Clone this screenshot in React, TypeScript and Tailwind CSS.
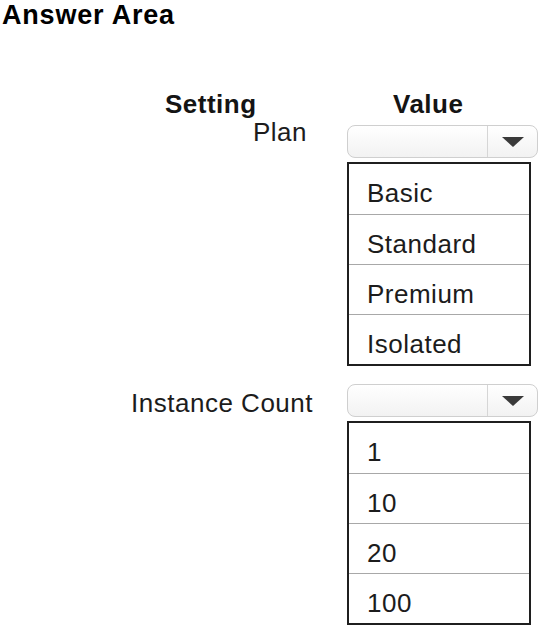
import React from 'react';

const plans = ['Basic', 'Standard', 'Premium', 'Isolated'];
const counts = ['1', '10', '20', '100'];

function Select() {
  return (
    <div className="flex w-[191px] h-[33px] rounded-[8px] border border-[#cfcfcf] bg-gradient-to-b from-white to-[#f2f2f2] overflow-hidden">
      <div className="flex-1 border-r border-[#d6d6d6]" />
      <div className="w-[49px] flex items-center justify-center">
        <svg width="22" height="10" viewBox="0 0 22 10">
          <polygon points="0,0 22,0 11,10" fill="#3a3a3a" />
        </svg>
      </div>
    </div>
  );
}

function OptionList({ items }: { items: string[] }) {
  return (
    <div className="w-[184px] border-2 border-[#1f1f1f] bg-white">
      {items.map((item, i) => (
        <div
          key={item}
          className={`h-[50px] pl-[18px] pt-[16px] leading-[26px] ${i > 0 ? 'border-t border-[#a8a8a8]' : ''}`}
        >
          {item}
        </div>
      ))}
    </div>
  );
}

export default function App() {
  return (
    <div className="w-[543px] h-[632px] bg-white font-['Liberation_Sans',Arial,sans-serif] text-[26px] tracking-[0.5px] text-[#1c1c1c] overflow-hidden">
      {/* Title */}
      <h1 className="pl-[2px] text-[27px] leading-[30px] font-bold tracking-[0.8px] text-black">Answer Area</h1>

      {/* Column headers */}
      <div className="mt-[61px] flex font-bold leading-[26px] text-[#141414]">
        <div className="w-[393px] pl-[165px]">Setting</div>
        <div>Value</div>
      </div>

      {/* Plan */}
      <div className="mt-[8px] flex items-start">
        <div className="w-[347px] pr-[40px] text-right leading-[26px] -mt-[6px]">Plan</div>
        <Select />
      </div>
      <div className="mt-[4px] pl-[347px]">
        <OptionList items={plans} />
      </div>

      {/* Instance Count */}
      <div className="mt-[18px] flex items-center">
        <div className="w-[347px] pr-[34px] text-right leading-[26px] mt-[4px]">Instance Count</div>
        <Select />
      </div>
      <div className="mt-[4px] pl-[347px]">
        <OptionList items={counts} />
      </div>
    </div>
  );
}
